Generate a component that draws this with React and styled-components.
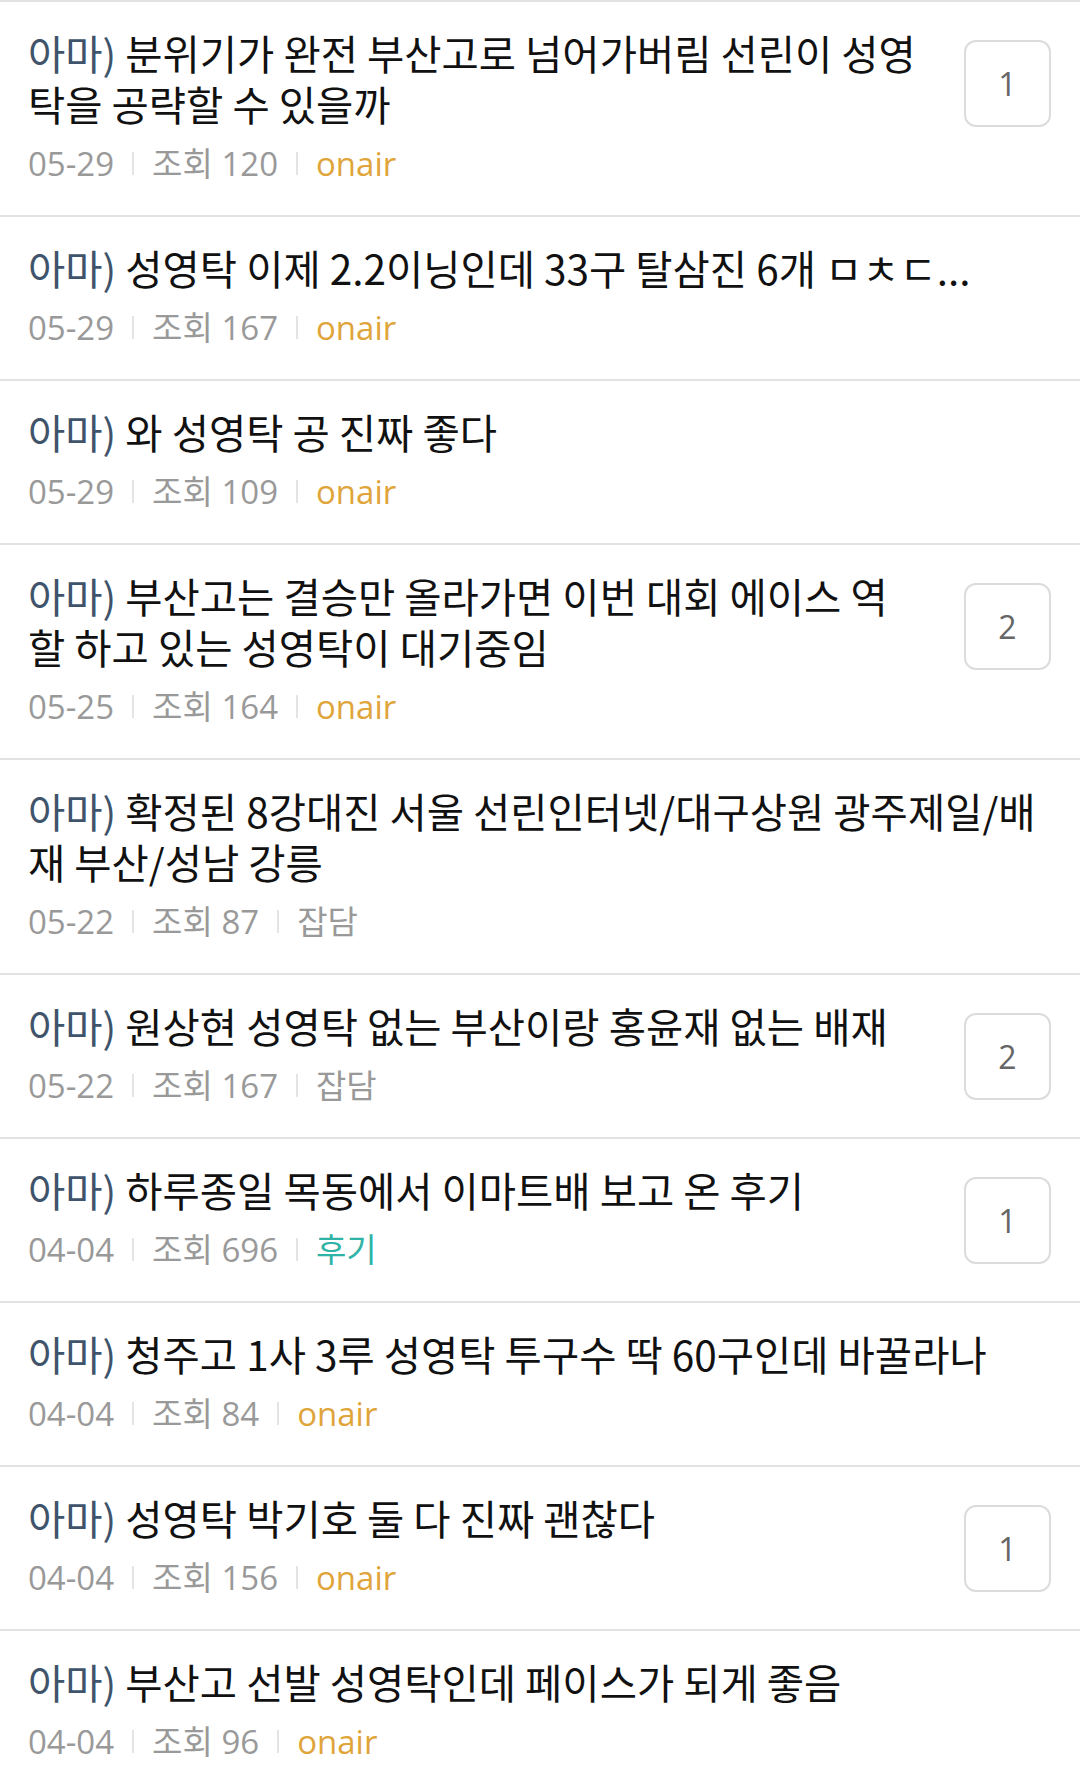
import React from "react";
import styled, { createGlobalStyle } from "styled-components";

const Global = createGlobalStyle`
  html, body { margin: 0; padding: 0; background: #ffffff; }
  body { font-family: "Noto Sans CJK KR", "Noto Sans", sans-serif; }
`;

const List = styled.ul`
  list-style: none;
  margin: 0;
  padding: 0;
  border-top: 2px solid #e2e2e2;
`;

const Row = styled.li`
  display: flex;
  align-items: flex-start;
  gap: 44px;
  padding: 25px 29px 29px 28px;
  border-bottom: 2px solid #e2e2e2;
`;

const Body = styled.div`
  flex: 1;
  min-width: 0;
`;

const Title = styled.div`
  font-family: "Noto Sans CJK KR", sans-serif;
  font-size: 40.5px;
  line-height: 51px;
  color: #111111;
`;

const Prefix = styled.span`
  color: #3f546b;
`;

const Meta = styled.div`
  display: flex;
  align-items: center;
  margin-top: 12px;
  font-family: "Open Sans", "Noto Sans CJK KR", sans-serif;
  font-size: 33px;
  line-height: 45px;
  color: #999999;
`;

const Sep = styled.span`
  width: 2px;
  height: 23px;
  margin: 0 18px;
  background: #e4e4e4;
`;

const Category = styled.span`
  color: ${(p) => p.$color};
`;

const CountBox = styled.div`
  flex: none;
  box-sizing: border-box;
  width: 87px;
  height: 87px;
  margin-top: 13px;
  border: 2px solid #dcdcdc;
  border-radius: 12px;
  display: flex;
  align-items: center;
  justify-content: center;
  font-family: "Open Sans", sans-serif;
  font-size: 32px;
  color: #666666;
`;

const catColors = {
  onair: "#e0a53a",
  잡담: "#999999",
  후기: "#2fb3a6",
};

const posts = [
  { title: "분위기가 완전 부산고로 넘어가버림 선린이 성영탁을 공략할 수 있을까", date: "05-29", views: 120, cat: "onair", count: 1 },
  { title: "성영탁 이제 2.2이닝인데 33구 탈삼진 6개 ㅁㅊㄷ...", date: "05-29", views: 167, cat: "onair" },
  { title: "와 성영탁 공 진짜 좋다", date: "05-29", views: 109, cat: "onair" },
  { title: "부산고는 결승만 올라가면 이번 대회 에이스 역할 하고 있는 성영탁이 대기중임", date: "05-25", views: 164, cat: "onair", count: 2 },
  { title: "확정된 8강대진 서울 선린인터넷/대구상원 광주제일/배재 부산/성남 강릉", date: "05-22", views: 87, cat: "잡담" },
  { title: "원상현 성영탁 없는 부산이랑 홍윤재 없는 배재", date: "05-22", views: 167, cat: "잡담", count: 2 },
  { title: "하루종일 목동에서 이마트배 보고 온 후기", date: "04-04", views: 696, cat: "후기", count: 1 },
  { title: "청주고 1사 3루 성영탁 투구수 딱 60구인데 바꿀라나", date: "04-04", views: 84, cat: "onair" },
  { title: "성영탁 박기호 둘 다 진짜 괜찮다", date: "04-04", views: 156, cat: "onair", count: 1 },
  { title: "부산고 선발 성영탁인데 페이스가 되게 좋음", date: "04-04", views: 96, cat: "onair" },
];

export default function App() {
  return (
    <>
      <Global />
      <List>
        {posts.map((p, i) => (
          <Row key={i}>
            <Body>
              <Title>
                <Prefix>아마)</Prefix> {p.title}
              </Title>
              <Meta>
                <span>{p.date}</span>
                <Sep />
                <span>조회 {p.views}</span>
                <Sep />
                <Category $color={catColors[p.cat]}>{p.cat}</Category>
              </Meta>
            </Body>
            {p.count != null && <CountBox>{p.count}</CountBox>}
          </Row>
        ))}
      </List>
    </>
  );
}
